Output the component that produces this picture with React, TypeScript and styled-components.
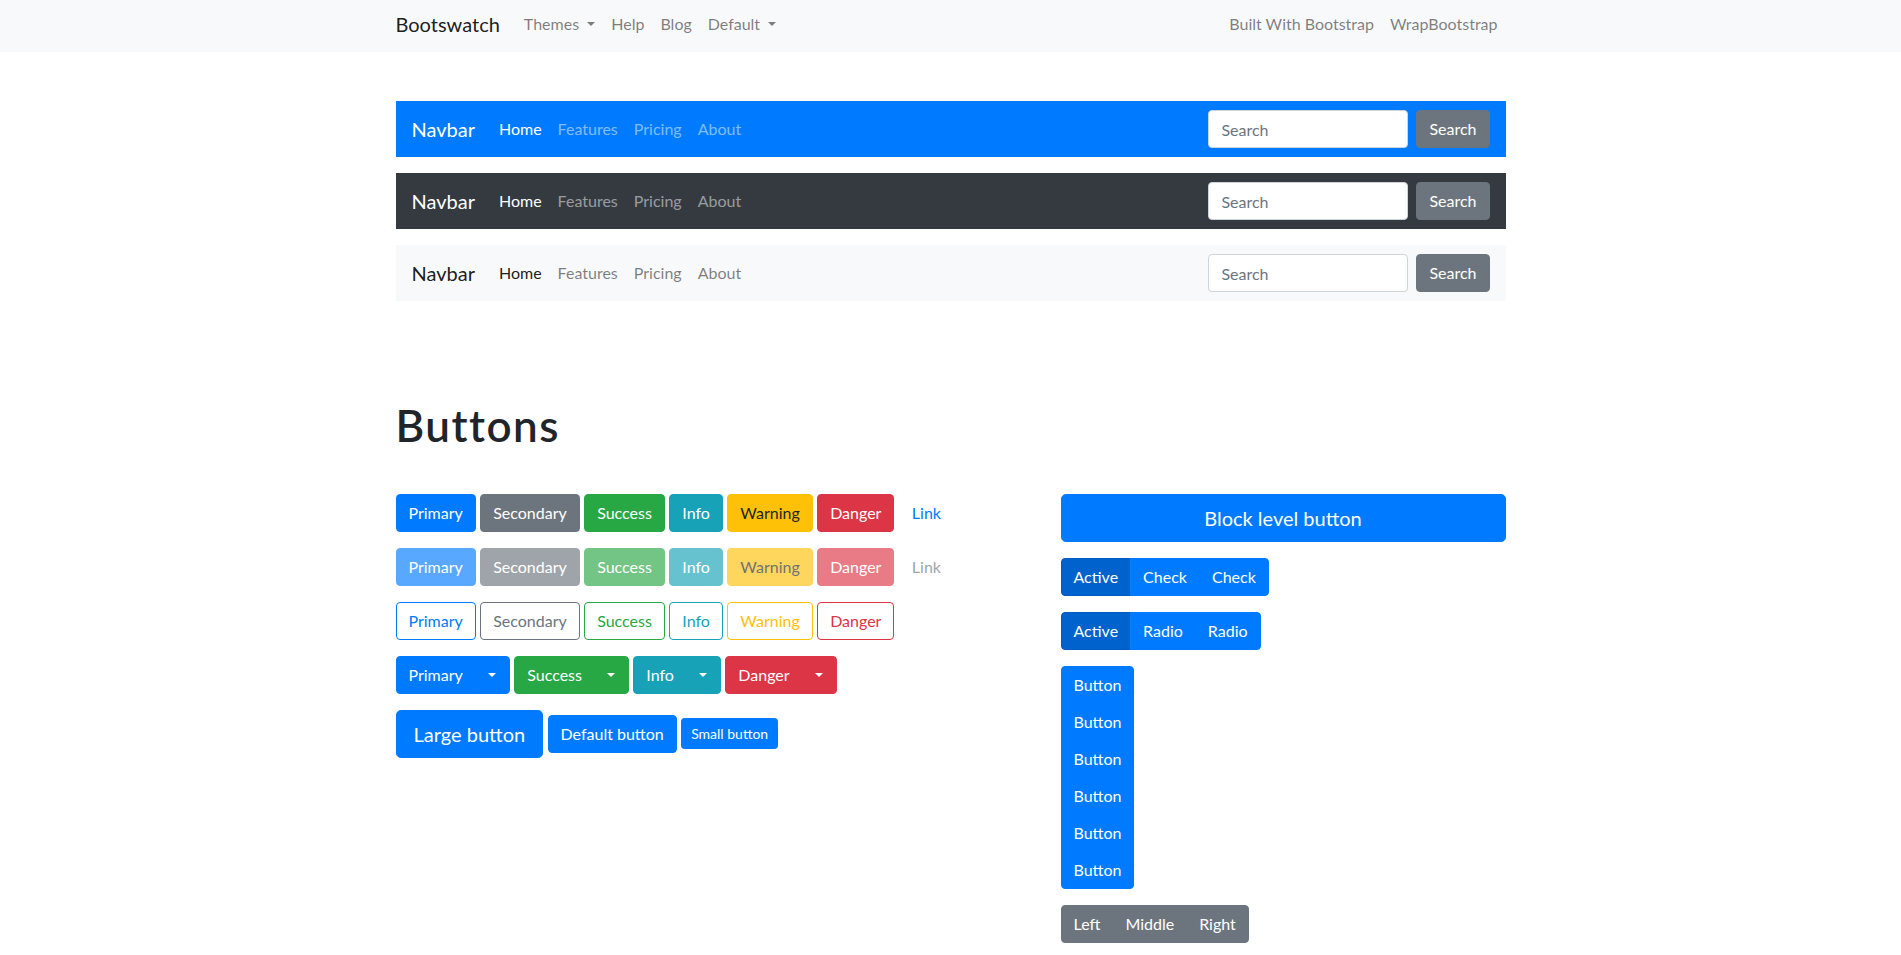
import React from "react";
import styled, { createGlobalStyle, css } from "styled-components";

const GlobalStyle = createGlobalStyle`
  *, *::before, *::after { box-sizing: border-box; }
  html, body { margin: 0; padding: 0; }
  body {
    font-family: Lato, "Segoe UI", "Liberation Sans", sans-serif;
    font-size: 16px;
    line-height: 1.5;
    color: #212529;
    background: #fff;
  }
  button, input { font-family: inherit; }
`;

const Container = styled.div`
  max-width: 1140px;
  padding: 0 15px;
  margin: 0 auto;
`;

/* ---------- top bar ---------- */
const TopBar = styled.header`
  background: #f8f9fa;
  height: 52px;
`;

const TopInner = styled(Container)`
  display: flex;
  align-items: center;
  height: 48px;
`;

const TopBrand = styled.a`
  font-size: 20px;
  line-height: 30px;
  color: rgba(0, 0, 0, 0.9);
  margin-right: 16px;
  text-decoration: none;
`;

const TopNav = styled.nav<{ $right?: boolean }>`
  display: flex;
  align-items: center;
  margin-left: ${(p) => (p.$right ? "auto" : "0")};
`;

const TopLink = styled.a`
  display: block;
  padding: 0 8px;
  line-height: 24px;
  color: rgba(0, 0, 0, 0.5);
  text-decoration: none;
  white-space: nowrap;
`;

const Caret = styled.span<{ $flat?: boolean }>`
  display: inline-block;
  width: 0;
  height: 0;
  margin-left: ${(p) => (p.$flat ? "0" : "0.255em")};
  vertical-align: ${(p) => (p.$flat ? "middle" : "0.255em")};
  border-top: 0.3em solid;
  border-left: 0.3em solid transparent;
  border-right: 0.3em solid transparent;
`;

/* ---------- demo navbars ---------- */
type NavVariant = "primary" | "dark" | "light";
const navBg: Record<NavVariant, string> = {
  primary: "#007bff",
  dark: "#343a40",
  light: "#f8f9fa",
};

const NavbarStack = styled.div`
  display: flex;
  flex-direction: column;
  gap: 16px;
  margin-top: 49px;
`;

const DemoNavbar = styled.nav<{ $variant: NavVariant }>`
  display: flex;
  align-items: center;
  height: 56px;
  padding: 0 16px;
  background: ${(p) => navBg[p.$variant]};
`;

const DemoBrand = styled.a<{ $light: boolean }>`
  font-size: 20px;
  line-height: 30px;
  margin-right: 16px;
  color: ${(p) => (p.$light ? "rgba(0,0,0,.9)" : "#fff")};
  text-decoration: none;
`;

const DemoLinks = styled.div`
  display: flex;
`;

const DemoLink = styled.a<{ $light: boolean; $active?: boolean }>`
  padding: 8px;
  line-height: 24px;
  text-decoration: none;
  color: ${(p) =>
    p.$light
      ? p.$active
        ? "rgba(0,0,0,.9)"
        : "rgba(0,0,0,.5)"
      : p.$active
      ? "#fff"
      : "rgba(255,255,255,.5)"};
`;

const SearchForm = styled.form`
  margin-left: auto;
  display: flex;
  align-items: center;
  gap: 8px;
`;

const SearchInput = styled.input`
  width: 200px;
  height: 38px;
  padding: 6px 12px;
  font-size: 16px;
  line-height: 24px;
  color: #495057;
  background: #fff;
  border: 1px solid #ced4da;
  border-radius: 4px;
  outline: none;
  &::placeholder {
    color: #6c757d;
    opacity: 1;
  }
`;

/* ---------- buttons ---------- */
type Variant = "primary" | "secondary" | "success" | "info" | "warning" | "danger";
const palette: Record<Variant, { bg: string; fg: string }> = {
  primary: { bg: "#007bff", fg: "#fff" },
  secondary: { bg: "#6c757d", fg: "#fff" },
  success: { bg: "#28a745", fg: "#fff" },
  info: { bg: "#17a2b8", fg: "#fff" },
  warning: { bg: "#ffc107", fg: "#212529" },
  danger: { bg: "#dc3545", fg: "#fff" },
};

type Size = "sm" | "md" | "lg";
const sizeCss: Record<Size, ReturnType<typeof css>> = {
  sm: css`
    height: 31px;
    padding: 0 9px;
    font-size: 14px;
    line-height: 21px;
    border-radius: 3.2px;
  `,
  md: css`
    height: 38px;
    padding: 0 12px;
    font-size: 16px;
    line-height: 24px;
    border-radius: 4px;
  `,
  lg: css`
    height: 48px;
    padding: 0 17px;
    font-size: 20px;
    line-height: 30px;
    border-radius: 4.8px;
  `,
};

const Btn = styled.button<{
  $variant?: Variant;
  $outline?: boolean;
  $size?: Size;
  $disabled?: boolean;
  $active?: boolean;
  $link?: boolean;
  $block?: boolean;
}>`
  display: inline-flex;
  align-items: center;
  justify-content: center;
  flex-shrink: 0;
  border: 1px solid transparent;
  font-weight: 400;
  white-space: nowrap;
  cursor: pointer;
  ${(p) => sizeCss[p.$size ?? "md"]}
  ${(p) => {
    if (p.$link) {
      return css`
        background: transparent;
        border-color: transparent;
        color: ${p.$disabled ? "#6c757d" : "#007bff"};
      `;
    }
    const c = palette[p.$variant ?? "primary"];
    if (p.$outline) {
      return css`
        background: transparent;
        border-color: ${c.bg};
        color: ${c.bg};
      `;
    }
    if (p.$active) {
      return css`
        background: #0062cc;
        border-color: #005cbf;
        color: #fff;
      `;
    }
    return css`
      background: ${c.bg};
      border-color: ${c.bg};
      color: ${c.fg};
    `;
  }}
  opacity: ${(p) => (p.$disabled ? 0.65 : 1)};
  width: ${(p) => (p.$block ? "100%" : "auto")};
`;

const ToggleBtn = styled(Btn)`
  padding: 0 12.5px;
  color: #fff;
`;

const BtnGroup = styled.div<{ $vertical?: boolean }>`
  display: inline-flex;
  flex-direction: ${(p) => (p.$vertical ? "column" : "row")};
  & > ${Btn} {
    border-radius: 0;
  }
  ${(p) =>
    p.$vertical
      ? css`
          & > ${Btn} + ${Btn} {
            margin-top: -1px;
          }
          & > ${Btn}:first-child {
            border-top-left-radius: 4px;
            border-top-right-radius: 4px;
          }
          & > ${Btn}:last-child {
            border-bottom-left-radius: 4px;
            border-bottom-right-radius: 4px;
          }
        `
      : css`
          & > ${Btn} + ${Btn} {
            margin-left: -1px;
          }
          & > ${Btn}:first-child {
            border-top-left-radius: 4px;
            border-bottom-left-radius: 4px;
          }
          & > ${Btn}:last-child {
            border-top-right-radius: 4px;
            border-bottom-right-radius: 4px;
          }
        `}
`;

/* ---------- layout ---------- */
const Heading = styled.h1`
  margin: 98px 0 42px;
  font-size: 44px;
  line-height: 1.2;
  font-weight: 600;
  letter-spacing: 1.5px;
  color: #212529;
`;

const Row = styled.div`
  display: flex;
  margin: 0 -15px;
`;

const Col = styled.div<{ $span: number }>`
  flex: 0 0 ${(p) => (p.$span / 12) * 100}%;
  max-width: ${(p) => (p.$span / 12) * 100}%;
  padding: 0 15px;
  display: flex;
  flex-direction: column;
  align-items: flex-start;
  gap: 16px;
`;

const BtnLine = styled.div`
  display: flex;
  align-items: center;
  gap: 4.4px;
`;

const variants: Variant[] = ["primary", "secondary", "success", "info", "warning", "danger"];
const label = (v: Variant) => v.charAt(0).toUpperCase() + v.slice(1);

function DemoBar({ variant }: { variant: NavVariant }) {
  const light = variant === "light";
  return (
    <DemoNavbar $variant={variant}>
      <DemoBrand $light={light}>Navbar</DemoBrand>
      <DemoLinks>
        <DemoLink $light={light} $active>
          Home
        </DemoLink>
        <DemoLink $light={light}>Features</DemoLink>
        <DemoLink $light={light}>Pricing</DemoLink>
        <DemoLink $light={light}>About</DemoLink>
      </DemoLinks>
      <SearchForm onSubmit={(e) => e.preventDefault()}>
        <SearchInput placeholder="Search" />
        <Btn $variant="secondary" type="button">
          Search
        </Btn>
      </SearchForm>
    </DemoNavbar>
  );
}

export default function App() {
  const splits: Variant[] = ["primary", "success", "info", "danger"];
  return (
    <>
      <GlobalStyle />
      <TopBar>
        <TopInner>
          <TopBrand>Bootswatch</TopBrand>
          <TopNav>
            <TopLink>
              Themes <Caret />
            </TopLink>
            <TopLink>Help</TopLink>
            <TopLink>Blog</TopLink>
            <TopLink>
              Default <Caret />
            </TopLink>
          </TopNav>
          <TopNav $right>
            <TopLink>Built With Bootstrap</TopLink>
            <TopLink>WrapBootstrap</TopLink>
          </TopNav>
        </TopInner>
      </TopBar>

      <Container>
        <NavbarStack>
          <DemoBar variant="primary" />
          <DemoBar variant="dark" />
          <DemoBar variant="light" />
        </NavbarStack>

        <Heading>Buttons</Heading>

        <Row>
          <Col $span={7}>
            <BtnLine>
              {variants.map((v) => (
                <Btn key={v} $variant={v}>
                  {label(v)}
                </Btn>
              ))}
              <Btn $link>Link</Btn>
            </BtnLine>
            <BtnLine>
              {variants.map((v) => (
                <Btn key={v} $variant={v} $disabled>
                  {label(v)}
                </Btn>
              ))}
              <Btn $link $disabled>
                Link
              </Btn>
            </BtnLine>
            <BtnLine>
              {variants.map((v) => (
                <Btn key={v} $variant={v} $outline>
                  {label(v)}
                </Btn>
              ))}
            </BtnLine>
            <BtnLine>
              {splits.map((v) => (
                <BtnGroup key={v}>
                  <Btn $variant={v}>{label(v)}</Btn>
                  <ToggleBtn $variant={v}>
                    <Caret $flat />
                  </ToggleBtn>
                </BtnGroup>
              ))}
            </BtnLine>
            <BtnLine>
              <Btn $size="lg">Large button</Btn>
              <Btn>Default button</Btn>
              <Btn $size="sm">Small button</Btn>
            </BtnLine>
          </Col>

          <Col $span={5}>
            <Btn $size="lg" $block>
              Block level button
            </Btn>
            <BtnGroup>
              <Btn $active>Active</Btn>
              <Btn>Check</Btn>
              <Btn>Check</Btn>
            </BtnGroup>
            <BtnGroup>
              <Btn $active>Active</Btn>
              <Btn>Radio</Btn>
              <Btn>Radio</Btn>
            </BtnGroup>
            <BtnGroup $vertical>
              {Array.from({ length: 6 }).map((_, i) => (
                <Btn key={i}>Button</Btn>
              ))}
            </BtnGroup>
            <BtnGroup>
              <Btn $variant="secondary">Left</Btn>
              <Btn $variant="secondary">Middle</Btn>
              <Btn $variant="secondary">Right</Btn>
            </BtnGroup>
          </Col>
        </Row>
      </Container>
    </>
  );
}
